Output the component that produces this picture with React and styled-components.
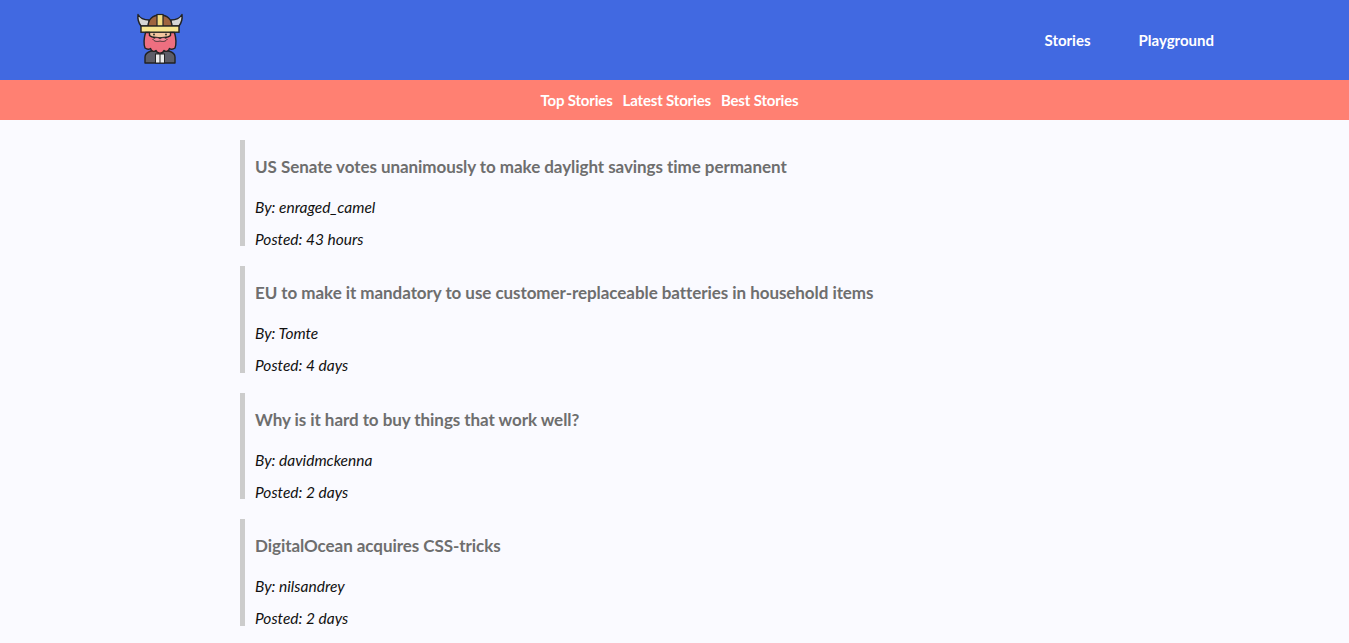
import React from "react";
import styled, { createGlobalStyle } from "styled-components";

const GlobalStyle = createGlobalStyle`
  html, body {
    margin: 0;
    padding: 0;
    background: #fafaff;
    font-family: Lato, "Open Sans", sans-serif;
  }
`;

const Header = styled.header`
  display: flex;
  height: 80px;
  justify-content: space-between;
  align-items: center;
  padding: 0 135px;
  background: #4169e1;
`;
const Logo = styled.svg`
  display: block;
  width: 50px;
  height: 56px;
`;
const Nav = styled.nav`
  display: flex;
  gap: 48px;
`;
const NavLink = styled.a`
  color: #fff;
  font-size: 15px;
  font-weight: 700;
`;
const SubNav = styled.nav`
  display: flex;
  height: 40px;
  justify-content: center;
  align-items: center;
  gap: 10px;
  padding-right: 10px;
  background: #ff8072;
`;
const SubLink = styled.a`
  color: #fff;
  font-size: 15px;
  font-weight: 700;
  letter-spacing: -0.17px;
`;
const StoryList = styled.main`
  display: flex;
  flex-direction: column;
  gap: 20px;
  padding: 20px 240px 0;
`;
const Story = styled.article`
  display: flex;
  flex-direction: column;
  height: 106.4px;
  box-sizing: border-box;
  padding-left: 10px;
  border-left: 5px solid #ccc;
`;
const Title = styled.h2`
  margin: 17px 0 0;
  color: #6e6e6e;
  font-size: 17px;
  line-height: 20px;
  font-weight: 700;
  letter-spacing: -0.06px;
`;
const Meta = styled.p`
  margin: ${(p) => p.$top}px 0 0;
  color: #111;
  font-size: 15.5px;
  line-height: 18px;
  font-style: italic;
`;

const stories = [
  { title: "US Senate votes unanimously to make daylight savings time permanent", by: "enraged_camel", posted: "43 hours" },
  { title: "EU to make it mandatory to use customer-replaceable batteries in household items", by: "Tomte", posted: "4 days" },
  { title: "Why is it hard to buy things that work well?", by: "davidmckenna", posted: "2 days" },
  { title: "DigitalOcean acquires CSS-tricks", by: "nilsandrey", posted: "2 days" },
];

function Viking() {
  return (
    <Logo viewBox="0 0 50 56">
      {/* horns */}
      <path d="M6 14C3 10 2.5 6 3 2.5C5 6 9 8 14 8L14 14Z" fill="#d6d6d6" stroke="#222" strokeWidth="1.4" strokeLinejoin="round" />
      <path d="M44 14C47 10 47.5 6 47 2.5C45 6 41 8 36 8L36 14Z" fill="#d6d6d6" stroke="#222" strokeWidth="1.4" strokeLinejoin="round" />
      {/* body */}
      <path d="M10 51V45C10 42 13 40 16 39H34C37 40 40 42 40 45V51Z" fill="#5d5d68" stroke="#222" strokeWidth="1.4" strokeLinejoin="round" />
      <rect x="20.5" y="42" width="9" height="9" fill="#ececec" stroke="#222" strokeWidth="1" />
      <path d="M25 42V51" stroke="#222" strokeWidth="1" />
      {/* face */}
      <rect x="14" y="20" width="22" height="9" fill="#f3c6a0" />
      {/* helmet */}
      <path d="M13 14.5C13 7 18 3 25 3C32 3 37 7 37 14.5Z" fill="#a0653f" stroke="#222" strokeWidth="1.4" />
      <rect x="22" y="2.5" width="6" height="12" fill="#f4dd84" stroke="#222" strokeWidth="1.2" />
      <rect x="6" y="14" width="38" height="6.2" fill="#f8e58f" stroke="#222" strokeWidth="1.4" />
      {/* beard */}
      <path d="M10.5 20.5C9 26 8.5 32 10 36C12 37.5 14 37.5 15.5 36.5C16.5 39.5 19 40 21 38.5C22 42 28 42 29 38.5C31 40 33.5 39.5 34.5 36.5C36 37.5 38 37.5 40 36C41.5 32 41 26 39.5 20.5H35.5V23.5C33 26 29 25 25 26C21 25 17 26 14.5 23.5V20.5Z" fill="#ee6f80" stroke="#222" strokeWidth="1.4" strokeLinejoin="round" />
      <path d="M18 27.5C20 25 23 25 25 27C27 25 30 25 32 27.5C30 30 27 29.5 25 29C23 29.5 20 30 18 27.5Z" fill="#f58c9a" stroke="#222" strokeWidth="0.9" />
      <circle cx="19" cy="22.5" r="0.9" fill="#222" />
      <circle cx="31" cy="22.5" r="0.9" fill="#222" />
    </Logo>
  );
}

export default function App() {
  return (
    <>
      <GlobalStyle />
      <Header>
        <Viking />
        <Nav>
          <NavLink>Stories</NavLink>
          <NavLink>Playground</NavLink>
        </Nav>
      </Header>
      <SubNav>
        <SubLink>Top Stories</SubLink>
        <SubLink>Latest Stories</SubLink>
        <SubLink>Best Stories</SubLink>
      </SubNav>
      <StoryList>
        {stories.map((s) => (
          <Story key={s.title}>
            <Title>{s.title}</Title>
            <Meta $top={21}>By: {s.by}</Meta>
            <Meta $top={14}>Posted: {s.posted}</Meta>
          </Story>
        ))}
      </StoryList>
    </>
  );
}
